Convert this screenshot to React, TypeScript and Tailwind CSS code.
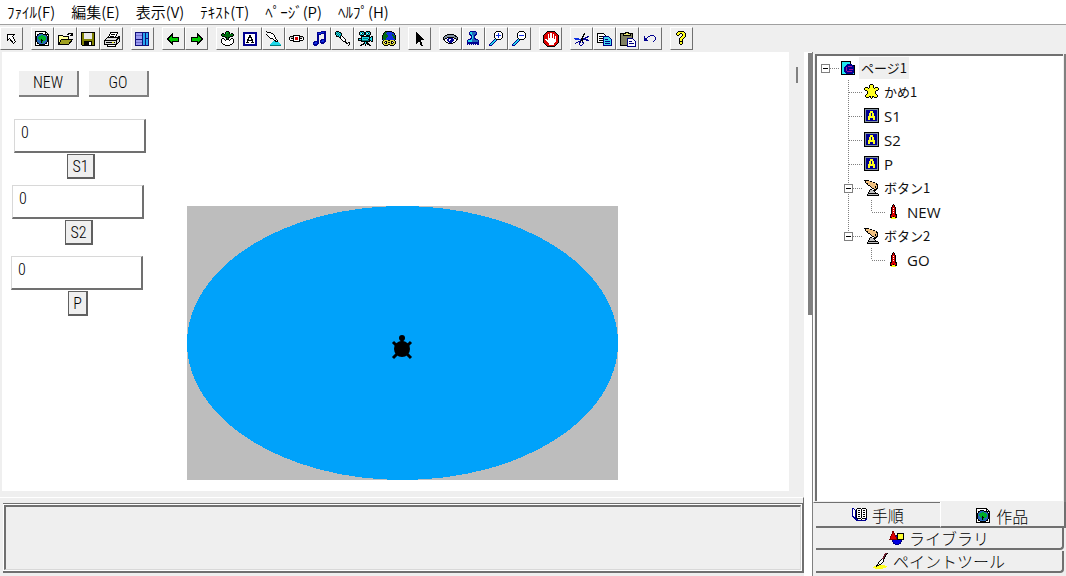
import { useState } from 'react'
import type { ReactNode } from 'react'
import clsx from 'clsx'

const menus = ['ﾌｧｲﾙ(F)', '編集(E)', '表示(V)', 'ﾃｷｽﾄ(T)', 'ﾍﾟｰｼﾞ(P)', 'ﾍﾙﾌﾟ(H)']

const jp = 'font-["Noto_Sans_CJK_JP",sans-serif]'

function Icon({ children }: { children: ReactNode }) {
  return (
    <svg width="16" height="16" viewBox="0 0 16 16" fill="none" shapeRendering="crispEdges" className="shrink-0">
      {children}
    </svg>
  )
}

const palette: Record<string, string> = {
  k: '#000000',
  w: '#ffffff',
  n: '#000090',
  b: '#1030e0',
  u: '#2468b8',
  g: '#006c10',
  G: '#00b028',
  y: '#ffff20',
  Y: '#e0d840',
  r: '#d80000',
  c: '#20d8e8',
  t: '#007878',
  s: '#c0c0c0',
  d: '#8090a0',
  o: '#f0c080',
  m: '#702030',
}

// one string per pixel row, one letter per pixel
function Pixels({ rows }: { rows: string[] }) {
  return (
    <>
      {rows.map((row, y) =>
        row.split('').map((c, x) =>
          palette[c] ? <rect key={`${x}-${y}`} x={x} y={y} width="1" height="1" fill={palette[c]} /> : null,
        ),
      )}
    </>
  )
}

const icons: Record<string, ReactNode> = {
  corner: <path d="M3.5 3.5h7l-2 2 3 5-2 2-4-5-2 2z" stroke="#000" fill="#fff" />,
  world: (
    <Pixels
      rows={[
        'kkkkkkkkkkk....',
        'kwwwwwwwwwkk...',
        'kwwwkkkkwwkwk..',
        'kwkkuuuukkkkkk.',
        'kwkuuuGGuuukwk.',
        'kkuuGGGGGGuukk.',
        'kkuGGGGGGGGukk.',
        'kkuGGGGGGGGukk.',
        'kkuuGGkGGGGukk.',
        'kkuuuGkkGGuukk.',
        'kkuuuukGuuuukk.',
        'kwkuuukGuuukwk.',
        'kwkkuuuuuukkwk.',
        'kwwwkkkkkkwwwk.',
        'kkkkkkkkkkkkkk.',
      ]}
    />
  ),
  open: (
    <>
      <path d="M.5 13.5v-9h4l1 1h5v2" fill="#ffff99" stroke="#000" />
      <path d="M.5 13.5l3-5h11l-4 5z" fill="#a0a020" stroke="#000" />
      <path d="M9 3h1V2h3v1h1v2M12 4.5h3M14.5 2v3" stroke="#000" />
    </>
  ),
  save: (
    <>
      <path d="M.5 1.5h13v13h-12l-1-1z" fill="#808000" stroke="#000" />
      <path d="M3 2h8v6H3z" fill="#e8e8e8" />
      <path d="M3 10h8v5H3z" fill="#000" />
      <path d="M8 11h2v3H8z" fill="#fff" />
    </>
  ),
  print: (
    <>
      <path d="M4.5 6.5l2-5h7l-2 5" fill="#fff" stroke="#000" />
      <path d="M7 3.5h4M6 5.5h4" stroke="#000" />
      <path d="M.5 9.5l3-3h9l3-1v5l-3 3h-12z" fill="#ddd" stroke="#000" />
      <path d="M1 9.5h11l3-3M12.5 10v3M2 11.5h9" stroke="#000" />
      <path d="M3.5 13.5h8v2h-8z" fill="#fff" stroke="#000" />
      <path d="M8 11h2v1H8z" fill="#dd0" />
    </>
  ),
  panes: (
    <>
      <path d="M0 1h14v14H0z" fill="#10107a" />
      <path d="M1 2h6v6H1zM1 9h6v5H1z" fill="#9999f0" />
      <path d="M8 2h2v12H8zM11 2h2v5h-2zM11 8h2v6h-2z" fill="#28a8f0" />
      <path d="M1 4.5h6M1 11.5h6" stroke="#7070d0" />
    </>
  ),
  left: <path d="M1.5 8l5-5v3h6v4h-6v3z" fill="#00c800" stroke="#000" />,
  right: <path d="M13.5 8l-5-5v3h-6v4h6v3z" fill="#00c800" stroke="#000" />,
  hatch: (
    <Pixels
      rows={[
        '......kkk......',
        '.....kGGgk.....',
        '..kk.kGggk.kk..',
        '.kggkggggggggk.',
        '.kgggggggggggk.',
        '..kkkgggggkkk..',
        '.....kkgkk.....',
        '..kk..kgk..kk..',
        '.kwwk.kkk.kwwk.',
        '.kwwwkwwwkwwwk.',
        '.kwwwwwwwwwwwk.',
        '.kwwwwwwwwwwwk.',
        '..kwwwwwwwwwk..',
        '...kkwwwwwkk...',
        '.....kkkkk.....',
      ]}
    />
  ),
  text: (
    <Pixels
      rows={[
        '',
        'nnnnnnnnnnnnnn',
        'nnnnnnnnnnnnnn',
        'nnwwwwwwwwwwnn',
        'nnwwwwkkwwwwnn',
        'nnwwwwkkwwwwnn',
        'nnwwwkkkkwwwnn',
        'nnwwwkwwkwwwnn',
        'nnwwkkwwkkwwnn',
        'nnwwkkkkkkwwnn',
        'nnwwkwwwwkwwnn',
        'nnwkkkwwkkkwnn',
        'nnwwwwwwwwwwnn',
        'nnnnnnnnnnnnnn',
        'nnnnnnnnnnnnnn',
      ]}
    />
  ),
  press: (
    <Pixels
      rows={[
        'k..............',
        '.kkkk..........',
        '..wwwkk........',
        'k.wwwwwk.......',
        '.kwwwwwwk......',
        '..kwwwwwk......',
        '...kwwwwwk.....',
        '....kkkwwk.....',
        '.......kwwk....',
        '........kkwk...',
        '.......cckkk...',
        '......ccccccc..',
        '.....ccccccccc.',
        '....ccccccccccc',
        '....ttttttttttt',
      ]}
    />
  ),
  slider: (
    <Pixels
      rows={[
        '',
        '',
        '',
        '',
        '....kkkkkkk....',
        '.kkkkwwwwwkkkk.',
        'kssskwrrrwksssk',
        'kwkkkwrrrwkkkwk',
        'kwwwkwrrrwkwwwk',
        '.kkkkwwwwwkkkk.',
        '....kkkkkkk....',
      ]}
    />
  ),
  music: (
    <Pixels
      rows={[
        '.........nnnnn',
        '.....nnnnbbbnn',
        '.....nbbbnnnnn',
        '.....nnnn...nn',
        '.....nn.....nn',
        '.....nn.....nn',
        '.....nn.....nn',
        '.....nn.....nn',
        '.....nn..nnnnn',
        '.....nn.nnbbnn',
        '..nnnnn.nbbbnn',
        '.nnbbnn.nnnnn.',
        '.nbbbnn..nnn..',
        '.nnnnn.........',
        '..nnn..........',
      ]}
    />
  ),
  mic: (
    <Pixels
      rows={[
        '.kkk...........',
        'kctckk.........',
        'ktctctk........',
        'kctctck........',
        '.kctctk........',
        '.kkkckwk.......',
        '....kkwwk......',
        '.....kwwwk.....',
        '......kwwwk....',
        '.......kwwk....',
        '........kkk....',
        '..........kk.kk',
        '...........kk.k',
        '..............k',
        '.............k.',
      ]}
    />
  ),
  movie: (
    <Pixels
      rows={[
        '..kkkk..kkkk...',
        '.kctctkkctctk..',
        '.kcwkckkcwkck..',
        '.kctctkkctctk..',
        '..kkkk..kkkk...',
        '...kkkkkkkkk.kk',
        '...kccccccckkck',
        'kkkkctttttckcck',
        'kcckcccccckkcck',
        'kkkktttttttkkck',
        '...kkkkkkkkk.kk',
        '......kckk.....',
        '.....kkckkk....',
        '...kkk.k.kkk...',
        '..kk...k...kk..',
      ]}
    />
  ),
  link: (
    <Pixels
      rows={[
        '....kkkkkkk....',
        '...kggbbbbbkk..',
        '..kggbbbbbbbbk.',
        '..kgggbbbbbgbk.',
        '.kgggggbbbbggbk',
        '.kgggggbbbbbggk',
        '.kggggbbbbbbggk',
        '.kgggbbbbbbbbgk',
        '.kbggbbbbbbbbbk',
        '..kYYYYkkYYYYk.',
        '.kYYkkYYYYkkYYk',
        '.kYk.kYkkYk.kYk',
        '.kYYkkYYYYkkYYk',
        '..kYYYYkkYYYYk.',
        '...kkkk..kkkk..',
      ]}
    />
  ),
  arrow: <path d="M4 1v12l3-3 2 5h2l-2-6h4z" fill="#000" />,
  eye: (
    <Pixels
      rows={[
        '',
        '',
        '',
        '....kkkkkkk....',
        '..kkdddddddkk..',
        '.kddddddddddkk.',
        'kdddkkkkkkkdddk',
        'kdkkwnnnnnwkkdk',
        'kkwwnnwwnnnwwkk',
        '.kwwnnwnnnnwwk.',
        '..kwwnnnnnwwk..',
        '...kkwnnnwkk...',
        '.....kkkkk.....',
      ]}
    />
  ),
  stamp: (
    <Pixels
      rows={[
        '....nnnnnn.....',
        '...nccuuuun....',
        '...nccuuuun....',
        '...nncuuunn....',
        '....nncunn.....',
        '.....ncun......',
        '.....ncun......',
        '....nncunn.....',
        '..nnncuuunnn...',
        '.nccccuuuuuun..',
        '.nccccuuuuuun..',
        '.nnnnnnnnnnnn..',
        '.nnnnnnnnnnnn..',
        '.n.n.n.n.n.nn..',
      ]}
    />
  ),
  zoomIn: (
    <Pixels
      rows={[
        '.......kkkkk...',
        '......kwwwwwk..',
        '.....kwwwbwwwk.',
        '.....kwwwbwwwk.',
        '.....kwbbbbbwk.',
        '.....kwwwbwwwk.',
        '.....kwwwbwwwk.',
        '......kwwwwwk..',
        '.....nckkkkk...',
        '....nccn.......',
        '...nccn........',
        '..nccn.........',
        '.nccn..........',
        'nccn...........',
        'nnn............',
      ]}
    />
  ),
  zoomOut: (
    <Pixels
      rows={[
        '.......kkkkk...',
        '......kwwwwwk..',
        '.....kwwwwwwwk.',
        '.....kwwwwwwwk.',
        '.....kwbbbbbwk.',
        '.....kwwwwwwwk.',
        '.....kwwwwwwwk.',
        '......kwwwwwk..',
        '.....nckkkkk...',
        '....nccn.......',
        '...nccn........',
        '..nccn.........',
        '.nccn..........',
        'nccn...........',
        'nnn............',
      ]}
    />
  ),
  stop: (
    <Pixels
      rows={[
        '....kkkkkkkk....',
        '...krrrrrrrrk...',
        '..krrrrwwrrrrk..',
        '.krrrwrwwrwrrrk.',
        'krrrrwrwwrwrrrrk',
        'krrrrwrwwrwrwrrk',
        'krrrrwrwwrwrwrrk',
        'krrrrwwwwwwrwrrk',
        'krwwrwwwwwwwwrrk',
        'krrwwwwwwwwwwrrk',
        'krrrwwwwwwwwwrrk',
        'krrrrwwwwwwwrrrk',
        '.krrrrwwwwwrrrk.',
        '..krrrwwwwwrrk..',
        '...krrrrrrrrk...',
        '....kkkkkkkk....',
      ]}
    />
  ),
  cut: (
    <Pixels
      rows={[
        '',
        '',
        '..........k....',
        '.........kk....',
        '.........k.....',
        '........kk...nn',
        '........k..nnn.',
        'bbbbb..kknnn...',
        '.bbbbbbkknnnnn.',
        '......nkk...nnn',
        '....nnk.k......',
        '..nn.nn.nn.....',
        '.n...n...n.....',
        '.....n..n......',
        '......nn.......',
      ]}
    />
  ),
  copy: (
    <>
      <path d="M.5 2.5h6l2 2v7h-8z" fill="#fff" stroke="#000" />
      <path d="M2 5.5h4M2 7.5h5M2 9.5h5" stroke="#000" />
      <path d="M6.5 5.5h5l3 3v6h-8z" fill="#40d8f0" stroke="#000080" />
      <path d="M8 8.5h3M8 10.5h5M8 12.5h5" stroke="#000080" />
    </>
  ),
  paste: (
    <>
      <path d="M.5 2.5h12v12H.5z" fill="#808060" stroke="#000" />
      <path d="M3.5 4.5v-2h2v-1h3v1h2v2z" fill="#e8e070" stroke="#000" />
      <path d="M7.5 7.5h5l3 3v5h-8z" fill="#fff" stroke="#000080" />
      <path d="M9 10.5h3M9 12.5h5" stroke="#000080" />
    </>
  ),
  undo: (
    <Pixels
      rows={[
        '',
        '',
        '',
        '',
        '.......nnnn....',
        '.n...nn....n...',
        '.n..n.......n..',
        '.nnn........n..',
        '.nnn........n..',
        '.nnnn......n...',
        '..........n....',
      ]}
    />
  ),
  help: (
    <Pixels
      rows={[
        '....kkkkkk.....',
        '...kyyyyyyk....',
        '..kyyykkyyyk...',
        '..kyyk..kyyk...',
        '...kk...kyyk...',
        '.......kyyyk...',
        '......kyyyk....',
        '.....kyyyk.....',
        '.....kyyk......',
        '.....kyyk......',
        '.....kkkk......',
        '.....kyyk......',
        '.....kyyk......',
        '......kk.......',
      ]}
    />
  ),
  page: (
    <>
      <path d="M.5 1.5h9l4 4v9H.5z" fill="#20e8f0" stroke="#000" />
      <path d="M9.5 1.5v4h4" fill="#fff" stroke="#000" />
      <path d="M6 4h4l3 2v7l-2 1H5l-2-2V7z" fill="#000090" />
      <path d="M11 6.5H7M5.5 7v4M6 11.5h5M8 9h4" stroke="#a010a0" />
    </>
  ),
  turtle: (
    <Pixels
      rows={[
        '......kkk......',
        '.....kyyyk.....',
        '.....kyyyk.....',
        '.kkk.kyyyk.kkk.',
        'kyyykyyyyykyyyk',
        'kyyyyyyyyyyyyyk',
        '.kkyyyyyyyyykk.',
        '...kyyyyyyyk...',
        '...kyyyyyyyk...',
        '...kyyyyyyyk...',
        '..kyyyyyyyyyk..',
        '.kyyyyyyyyyyyk.',
        '.kyyykkykkyyyk.',
        '..kkk.kyk.kkk..',
        '.......k.......',
      ]}
    />
  ),
  letter: (
    <Pixels
      rows={[
        'kkkkkkkkkkkkkkk',
        'kdddddddddddddk',
        'kdnnnnnnnnnnndk',
        'kdnnnnyyynnnndk',
        'kdnnnnyyynnnndk',
        'kdnnnyynyynnndk',
        'kdnnnyynyynnndk',
        'kdnnnyynyynnndk',
        'kdnnyyyyyyynndk',
        'kdnnyyyyyyynndk',
        'kdnnyynnnyynndk',
        'kdnnyynnnyynndk',
        'kdnnnnnnnnnnndk',
        'kdddddddddddddk',
        'kkkkkkkkkkkkkkk',
      ]}
    />
  ),
  hand: (
    <Pixels
      rows={[
        'kkkkk..........',
        '.kooookk.......',
        '.koooooookk....',
        '..kkooooooook..',
        '...kooooooookk.',
        '....kkoooooook.',
        '......kooookok.',
        '.......koookok.',
        '........kkookk.',
        '......kk..kkk..',
        '.....kssskkk...',
        '.....kssssk....',
        '....kssssssk...',
        '....kkkkkkkkkk.',
        '...kssssssssssk',
        '...kkkkkkkkkkkk',
      ]}
    />
  ),
  rocket: (
    <Pixels
      rows={[
        '......k........',
        '.....krk.......',
        '.....krk.......',
        '....krrrk......',
        '....krwrk......',
        '....krrrk......',
        '....krwrk......',
        '....krrrk......',
        '....krwrk......',
        '....krrrk......',
        '...kkrrrkk.....',
        '...krrrrrk.....',
        '...krrkrrk.....',
        '...kkyyykk.....',
        '....yyyyy......',
      ]}
    />
  ),
  book: (
    <Pixels
      rows={[
        '',
        'nn...kkkk.kkkk.',
        'nwn.kwwwwkwwwwk',
        'nwwnkwkkwkwkkwk',
        'nwwnkwwwwkwwwwk',
        'nwwnkwkkwkwkkwk',
        'nwwnkwwwwkwwwwk',
        'nwwnkwkkwkwkkwk',
        'nwwnkwwwwkwwwwk',
        'nnwnkwkkwkwkkwk',
        '.nnnkwwwwkwwwwk',
        '..nnnkkkkwkkkkn',
        '...nnnwwwkwwwnn',
        '....nnnnnnnnnn.',
      ]}
    />
  ),
  shapes: (
    <>
      <circle cx="8" cy="10" r="4.5" fill="#0000e0" stroke="#000080" />
      <path d="M4 1l4 8H1z" fill="#e00000" stroke="#800000" />
      <path d="M8.5 3.5h6v6h-6z" fill="#ffff30" stroke="#000" />
    </>
  ),
  brush: (
    <Pixels
      rows={[
        '............mmk',
        '...........mmk.',
        '...........mk..',
        '..........mmk..',
        '..........mk...',
        '.........mmk...',
        '........kwk....',
        '.......kwwk....',
        '......kwwwk....',
        '.....kwwwk.....',
        '.....kwwk......',
        '....kwkk.......',
        '...kkkyyyyyy...',
        '.yykyyyyyyyyyy.',
        'yyyyyyyyyyyyy..',
        '..yyyyyyyy.....',
      ]}
    />
  ),
}

const toolGroups = [
  ['corner'],
  ['world', 'open', 'save', 'print'],
  ['panes'],
  ['left', 'right'],
  ['hatch', 'text', 'press', 'slider', 'music', 'mic', 'movie', 'link'],
  ['arrow'],
  ['eye', 'stamp', 'zoomIn', 'zoomOut'],
  ['stop'],
  ['cut', 'copy', 'paste', 'undo'],
  ['help'],
]

// guides: one letter per column. t = tee, e = elbow, l = line, b = blank,
// r = root expander, x = expander with line below, z = last expander
const tree = [
  { label: 'ページ1', icon: 'page', guides: 'r', path: '1' },
  { label: 'かめ1', icon: 'turtle', guides: 'bt', path: '1.1' },
  { label: 'S1', icon: 'letter', guides: 'bt', path: '1.2' },
  { label: 'S2', icon: 'letter', guides: 'bt', path: '1.3' },
  { label: 'P', icon: 'letter', guides: 'bt', path: '1.4' },
  { label: 'ボタン1', icon: 'hand', guides: 'bx', path: '1.5' },
  { label: 'NEW', icon: 'rocket', guides: 'ble', path: '1.5.1' },
  { label: 'ボタン2', icon: 'hand', guides: 'bz', path: '1.6' },
  { label: 'GO', icon: 'rocket', guides: 'bbe', path: '1.6.1' },
]

function Guide({ kind, open }: { kind: string; open: boolean }) {
  const box = 'rxz'.includes(kind)
  return (
    <svg width="23" height="24" viewBox="0 0 23 24" shapeRendering="crispEdges" className="shrink-0" fill="none">
      {kind !== 'b' && kind !== 'r' && (
        <path d={kind === 'e' || kind === 'z' ? 'M7.5 0v12' : 'M7.5 0v24'} stroke="#808080" strokeDasharray="1 1" />
      )}
      {kind !== 'b' && kind !== 'l' && <path d="M8 12.5h14" stroke="#808080" strokeDasharray="1 1" />}
      {box && (
        <>
          <path d="M3.5 8.5h8v8h-8z" fill="#fff" stroke="#808080" />
          <path d="M5 12.5h5" stroke="#000" />
          {!open && <path d="M7.5 10v5" stroke="#000" />}
        </>
      )}
    </svg>
  )
}

function Tree() {
  const [closed, setClosed] = useState<string[]>([])
  const toggle = (path: string) =>
    setClosed((c) => (c.includes(path) ? c.filter((p) => p !== path) : [...c, path]))

  const visible = tree.filter((n) => !closed.some((c) => n.path.startsWith(c + '.')))

  return (
    <ul className="pl-px">
      {visible.map((node) => (
        <li key={node.path} className="flex h-6 items-center">
          {node.guides.split('').map((g, i) =>
            'rxz'.includes(g) ? (
              <button key={i} aria-label={node.label} onClick={() => toggle(node.path)} className="shrink-0">
                <Guide kind={g} open={!closed.includes(node.path)} />
              </button>
            ) : (
              <Guide key={i} kind={g} open />
            ),
          )}
          <Icon>{icons[node.icon]}</Icon>
          <span
            className={clsx(
              'ml-0.5 px-0.5 leading-[22px] whitespace-nowrap text-[#101010]',
              /^[A-Z]/.test(node.label)
                ? 'font-["Open_Sans",sans-serif] text-[15px]'
                : 'font-["Noto_Sans_CJK_JP",sans-serif] text-[13px]',
              node.path === '1' && 'bg-[#efefef]',
            )}
          >
            {node.label}
          </span>
        </li>
      ))}
    </ul>
  )
}

const canvasFont = 'font-["Roboto_Condensed","Roboto",sans-serif] text-base font-light'

function CanvasButton({ label, place }: { label: string; place: string }) {
  return (
    <button
      className={clsx(
        'absolute h-[26px] w-[60px] border-r-2 border-b-2 border-[#808080] bg-[#efefef] leading-6',
        canvasFont,
        place,
      )}
    >
      {label}
    </button>
  )
}

function TextBox({ id, place }: { id: string; place: string }) {
  const [value, setValue] = useState('0')
  return (
    <div className={clsx('absolute flex w-[132px] flex-col items-center', canvasFont, place)}>
      <input
        id={id}
        value={value}
        onChange={(e) => setValue(e.target.value)}
        className="h-[34px] w-full border border-r-2 border-b-2 border-t-[#d8d8d8] border-r-[#707070] border-b-[#707070] border-l-[#d8d8d8] bg-white px-1.5 pb-1.5 outline-none"
      />
      <label
        htmlFor={id}
        className="mt-px ml-0.5 h-[25px] border border-r-2 border-b-2 border-[#606060] bg-[#efefef] px-1 leading-6"
      >
        {id}
      </label>
    </div>
  )
}

function Canvas() {
  return (
    <div className="relative min-w-0 flex-1 overflow-hidden bg-white">
      <CanvasButton label="NEW" place="left-[17px] top-[19px]" />
      <CanvasButton label="GO" place="left-[87px] top-[19px]" />
      <TextBox id="S1" place="left-[12px] top-[67px]" />
      <TextBox id="S2" place="left-[10px] top-[133px]" />
      <TextBox id="P" place="left-[9px] top-[204px]" />
      <svg width="431" height="274" viewBox="0 0 431 274" className="absolute top-[154px] left-[185px]">
        <path d="M0 0h431v274H0z" fill="#bdbdbd" />
        <ellipse cx="215.5" cy="137" rx="215.5" ry="137" fill="#00a2fa" shapeRendering="crispEdges" />
        <g fill="#000" stroke="#000" strokeWidth="3">
          <circle cx="215" cy="132" r="3" stroke="none" />
          <path d="M215 133v4" />
          <circle cx="215" cy="143" r="8" stroke="none" />
          <path d="M206 136l4 4M224 136l-4 4M206 152l4-4M224 152l-4-4" />
        </g>
      </svg>
    </div>
  )
}

function Tab({ icon, label, className }: { icon: string; label: string; className: string }) {
  return (
    <button className={clsx('flex items-center justify-center gap-1 text-base leading-5 font-light', className)}>
      <Icon>{icons[icon]}</Icon>
      {label}
    </button>
  )
}

export default function App() {
  return (
    <div className={clsx('flex h-screen flex-col overflow-hidden bg-[#efefef] text-black', jp)}>
      <nav className="flex h-6 shrink-0 items-center gap-4 bg-white pl-[7px]">
        {menus.map((m) => (
          <button key={m} className="text-[15px] leading-6 font-[350] whitespace-nowrap">
            {m}
          </button>
        ))}
      </nav>

      <div className="flex h-7 shrink-0 items-center gap-2 border-t border-[#a0a0a0]">
        {toolGroups.map((group) => (
          <div key={group[0]} className="flex">
            {group.map((name) => (
              <button
                key={name}
                aria-label={name}
                className="flex size-[23px] items-center justify-center border border-t-white border-r-[#707070] border-b-[#707070] border-l-white"
              >
                <Icon>{icons[name]}</Icon>
              </button>
            ))}
          </div>
        ))}
      </div>

      <div className="flex min-h-0 flex-1">
        <main className="flex min-w-0 flex-1 flex-col">
          <div className="flex min-h-0 flex-1 pl-0.5">
            <Canvas />
            <div className="w-[15px] shrink-0 pt-[15px] pl-[7px]">
              <div className="h-4 w-0.5 bg-[#808080]" />
            </div>
          </div>
          <div className="mt-1.5 h-1.5 shrink-0 border-t border-r border-t-white border-r-[#707070]" />
          {/* command center */}
          <div className="mb-[3px] ml-[3px] h-[70px] shrink-0 border-t border-r-2 border-b-2 border-[#707070]">
            <div className="h-full border border-white">
              <div className="h-full border-t-2 border-r border-b border-l-2 border-t-[#707070] border-r-[#d8d8d8] border-b-[#d8d8d8] border-l-[#707070]" />
            </div>
          </div>
        </main>

        <div className="flex w-[9px] shrink-0 border-r border-r-[#808080] bg-white pl-1">
          <div className="mt-px h-[262px] flex-1 bg-[#808080]" />
        </div>

        <aside className="flex w-[253px] shrink-0 flex-col pt-0.5 pb-[3px]">
          <div className="flex min-h-0 flex-1 flex-col border-r-2 border-b border-l border-r-[#808080] border-b-[#707070] border-l-white pr-px pb-px pl-px">
            <div className="min-h-0 flex-1 overflow-hidden border-t-2 border-l-2 border-[#707070] bg-white">
              <Tree />
            </div>
          </div>
          <div className="flex h-[25px] shrink-0 pl-[3px]">
            <Tab icon="book" label="手順" className="flex-1 border-b-2 border-[#707070]" />
            <Tab
              icon="world"
              label="作品"
              className="-mt-px flex-1 border-r-2 border-b-2 border-l border-r-[#707070] border-b-[#707070] border-l-white bg-[#efefef] pt-1"
            />
          </div>
          <div className="flex shrink-0 flex-col gap-px pr-0.5 pl-[3px]">
            <Tab icon="shapes" label="ライブラリ" className="h-[22px] rounded-br-sm border-r-2 border-b-2 border-[#707070]" />
            <Tab icon="brush" label="ペイントツール" className="h-[22px] rounded-br-sm border-r-2 border-b-2 border-[#707070]" />
          </div>
        </aside>
      </div>
    </div>
  )
}
